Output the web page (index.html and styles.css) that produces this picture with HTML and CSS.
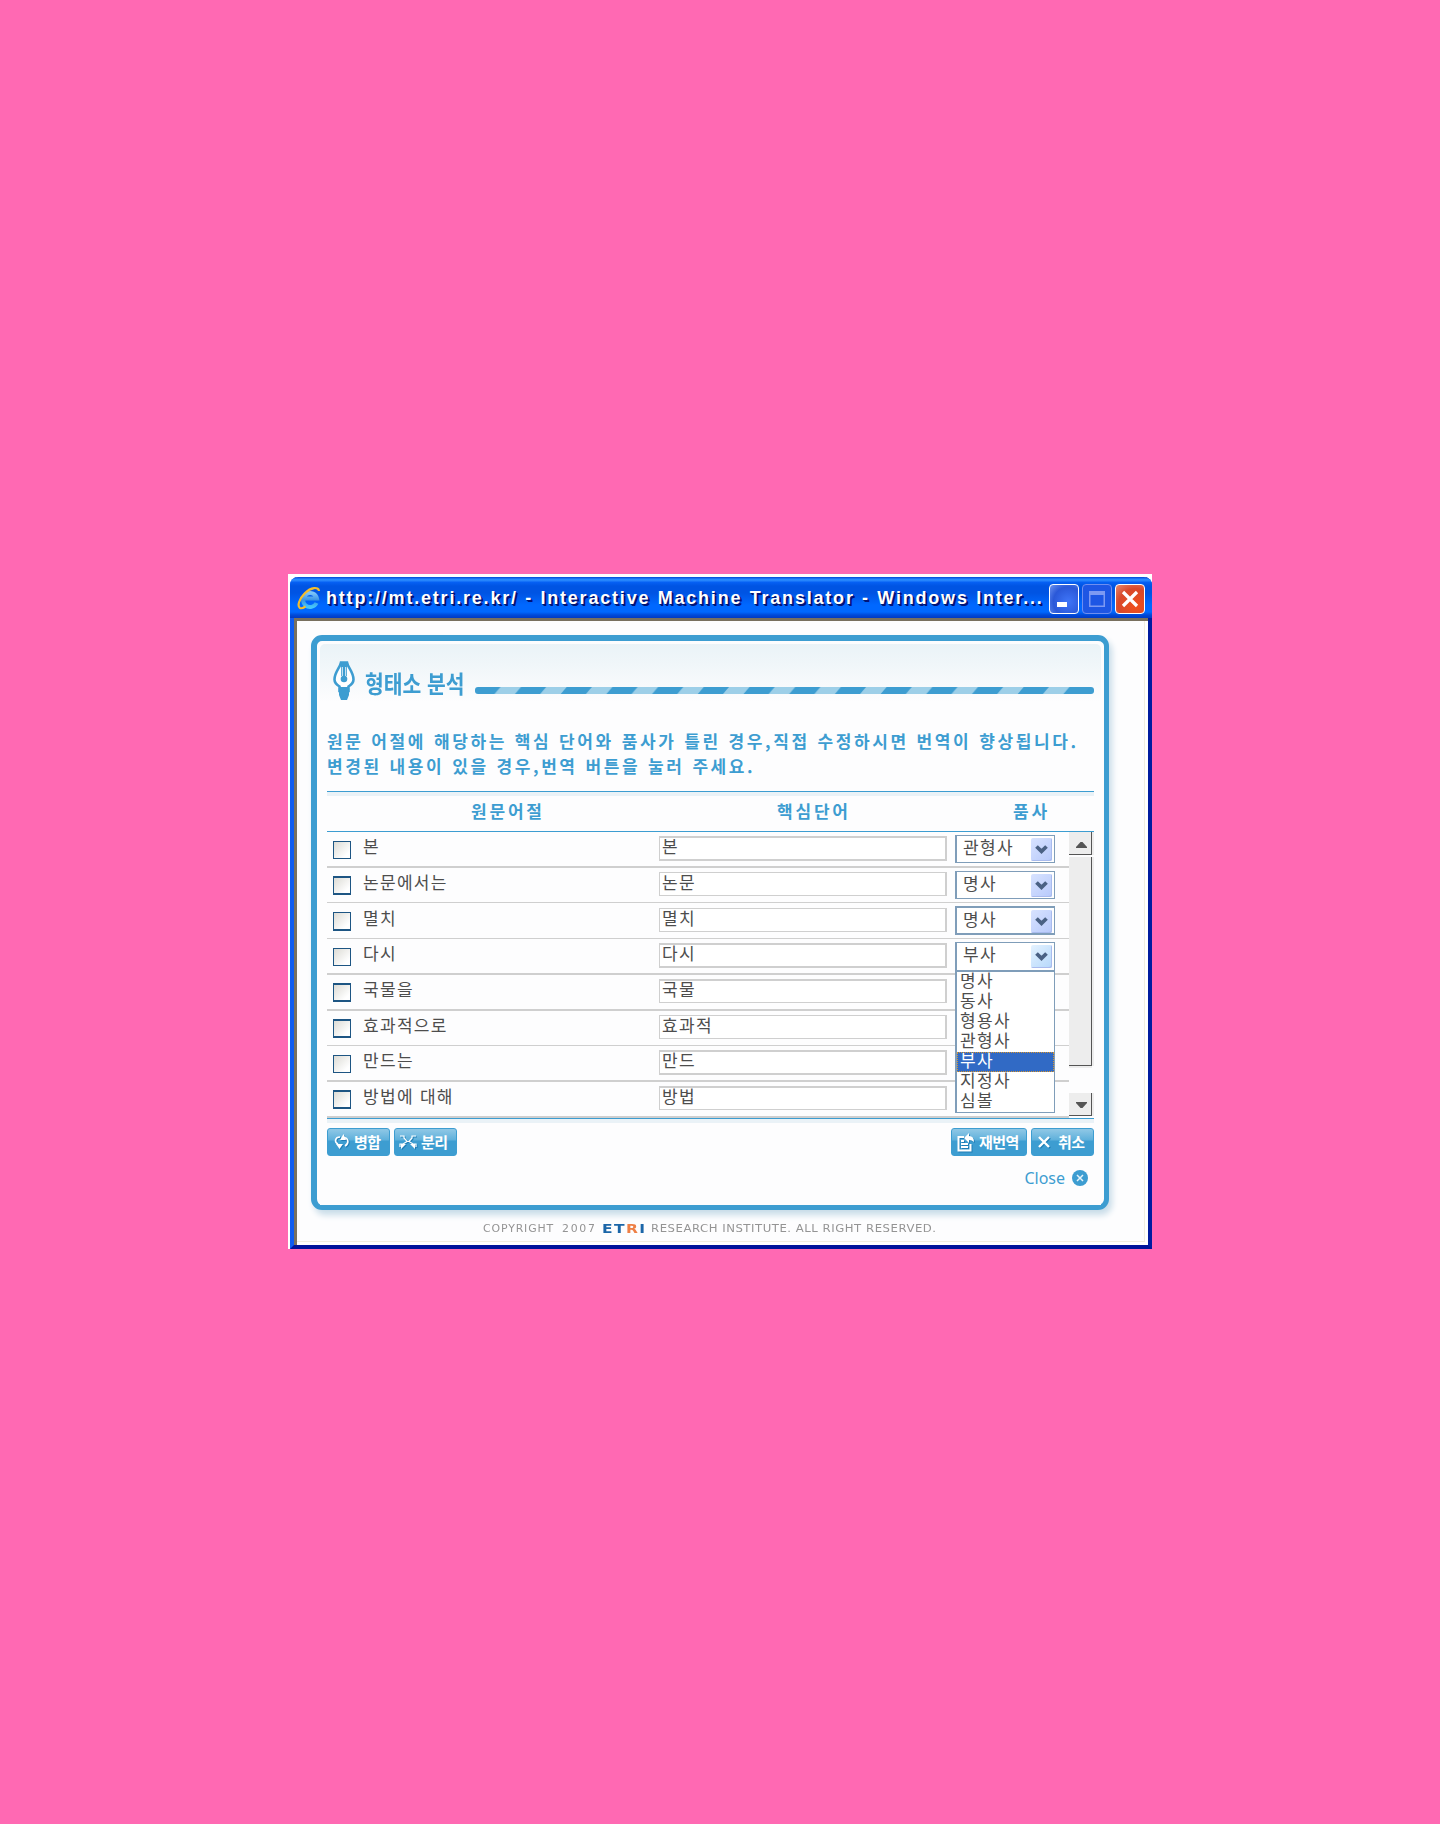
FILE: index.html
```html
<!DOCTYPE html>
<html lang="ko">
<head>
<meta charset="utf-8">
<title>Interactive Machine Translator</title>
<link rel="stylesheet" href="styles.css">
</head>
<body>
<svg width="0" height="0" class="defs">
  <symbol id="chev" viewBox="0 0 13 10"><path d="M1.500 1.500L6.500 6.300L11.500 1.500" fill="none" stroke="#4a6184" stroke-width="3.800"/></symbol>
</svg>
<div class="frame">
<div class="window">
  <div class="titlebar">
    <svg class="ie" width="24" height="24" viewBox="0 0 24 24">
      <defs><linearGradient id="g" x1="0" y1="0" x2="0" y2="1"><stop offset="0" stop-color="#7cc4fa"/><stop offset=".5" stop-color="#3a93e4"/><stop offset="1" stop-color="#45c6fa"/></linearGradient></defs>
      <path d="M19.500 17A7 7 0 1 1 20 12.500H8" fill="none" stroke="url(#g)" stroke-width="4"/>
      <path d="M22 5C21.500 0.500 14 1 8 7C2 13 0 20 3 22C4.500 22.800 7 21.500 8.500 20.500" fill="none" stroke="#f4bd2c" stroke-width="2.200"/>
    </svg>
    <span class="caption">http://mt.etri.re.kr/ - Interactive Machine Translator - Windows Inter...</span>
    <div class="controls">
      <span class="ctl min"><svg width="30" height="30" viewBox="0 0 30 30"><rect x="8" y="18" width="10" height="5" fill="#fff"/></svg></span>
      <span class="ctl max"><svg width="30" height="30" viewBox="0 0 30 30"><path d="M7 7h16v16H7zM8.500 11v10.500h13V11z" fill="#7d99f2" fill-rule="evenodd"/></svg></span>
      <span class="ctl cls"><svg width="30" height="30" viewBox="0 0 30 30"><path d="M8 8L22 22M22 8L8 22" stroke="#fff" stroke-width="3.200"/></svg></span>
    </div>
  </div>
  <div class="client">
    <div class="panel">
      <div class="inner">
        <div class="head">
          <svg class="pen" width="22" height="40" viewBox="0 0 22 40">
            <path d="M8 1.500C7 7 1.500 11 1.500 18.500C1.500 22 4 24 6.500 25.500V30H15.500V25.500C18 24 20.500 22 20.500 18.500C20.500 11 15 7 14 1.500z" fill="#fff" stroke="#3d9dd1" stroke-width="2.600"/>
            <path d="M8 1h6v14H8zM6 26h10v8l-2 5H8l-2-5z" fill="#3d9dd1"/>
            <path d="M9.300 6v11M12.700 6v11" stroke="#e8f3f9" stroke-width="1"/>
            <circle cx="11" cy="18" r="3.300" fill="#3d9dd1"/>
          </svg>
          <h1><span>형태소 분석</span></h1>
          <svg class="bar" width="619" height="7" viewBox="0 0 619 7">
            <defs><pattern id="st" x="19.500" width="45.700" height="7" patternUnits="userSpaceOnUse"><path d="M0 7L6 0H26.500L20.500 7z" fill="#9dcfe8"/></pattern></defs>
            <rect width="619" height="7" rx="3" fill="#3d9dd1"/><rect x="19" width="594" height="7" fill="url(#st)"/>
          </svg>
        </div>
        <p class="l1">원문 어절에 해당하는 핵심 단어와 품사가 틀린 경우,<i></i>직접 수정하시면 번역이 향상됩니다.</p>
        <p class="l2">변경된 내용이 있을 경우,<i></i>번역 버튼을 눌러 주세요.</p>
        <div class="thead"><span class="c1">원문어절</span><span class="c2">핵심단어</span><span class="c3">품사</span></div>
        <div class="list">
          <div class="rows">
            <div class="row h36 b2"><b class="cb"></b><span class="w">본</span><span class="in t2 e2">본</span><span class="sel">관형사<em><svg width="13" height="10"><use href="#chev"/></svg></em></span></div>
            <div class="row h35 b1"><b class="cb up"></b><span class="w">논문에서는</span><span class="in">논문</span><span class="sel">명사<em><svg width="13" height="10"><use href="#chev"/></svg></em></span></div>
            <div class="row h36 b1"><b class="cb tall"></b><span class="w lo">멸치</span><span class="in lower">멸치</span><span class="sel heavy">명사<em><svg width="13" height="10"><use href="#chev"/></svg></em></span></div>
            <div class="row h36 b2"><b class="cb"></b><span class="w">다시</span><span class="in t2 e2">다시</span><span class="sel open">부사<em><svg width="13" height="10"><use href="#chev"/></svg></em>
              <ul class="menu"><li>명사</li><li>동사</li><li>형용사</li><li>관형사</li><li class="on">부사</li><li>지정사</li><li>심볼</li></ul></span></div>
            <div class="row h36 b2"><b class="cb up"></b><span class="w">국물을</span><span class="in t2">국물</span></div>
            <div class="row h35 b1"><b class="cb up"></b><span class="w">효과적으로</span><span class="in">효과적</span></div>
            <div class="row h36 b2"><b class="cb"></b><span class="w">만드는</span><span class="in t2 e2">만드</span></div>
            <div class="row h36 b2"><b class="cb up"></b><span class="w">방법에 대해</span><span class="in t2">방법</span></div>
          </div>
          <div class="scroll">
            <span class="sb"><svg width="11" height="6"><path d="M0 6V5L4.500 0h2L11 5v1z" fill="#555"/></svg></span>
            <span class="thumb"></span>
            <span class="sb down"><svg width="11" height="6"><path d="M0 0V1L4.500 6h2L11 1V0z" fill="#555"/></svg></span>
          </div>
        </div>
        <div class="actions">
          <span class="btn"><svg width="16" height="16" viewBox="0 0 16 16"><path d="M6 3C1 3 0 8 4 10M10 3.500c5 1 5 6 1 8.500" fill="none" stroke="#fff" stroke-width="1.600"/><path d="M2 10h7l-3.500 5zM6 6l3.500-6L12 6z" fill="#fff"/></svg><span>병합</span></span>
          <span class="btn"><svg width="18" height="14" viewBox="0 0 18 14"><path d="M1 1h4v2l3 3.500h2L13 3V1h4M1 12V9h3l4-2.500M17 12V9h-3l-4-2.500" fill="none" stroke="#fff" stroke-width="1.200"/><path d="M2 9h5L2 14zM16 9h-5l5 5z" fill="#fff"/></svg><span>분리</span></span>
          <span class="gap"></span>
          <span class="btn wide"><svg width="18" height="20" viewBox="0 0 18 20"><path d="M7 5H1.500v13.500h12V12M4 9h3M4 12h7M4 15h7" fill="none" stroke="#fff" stroke-width="2"/><path d="M7 6l5-5v3q5 0 5 6q-2-2-5-2v3z" fill="#fff"/></svg><span>재번역</span></span>
          <span class="btn x"><svg width="12" height="12" viewBox="0 0 12 12"><path d="M1 1L11 11M11 1L1 11" stroke="#fff" stroke-width="2.400"/></svg><span>취소</span></span>
        </div>
        <div class="close"><span>Close</span><svg width="16" height="16" viewBox="0 0 16 16"><circle cx="8" cy="8" r="8" fill="#3d9dd1"/><path d="M5 5l6 6M11 5l-6 6" stroke="#e6f3fa" stroke-width="1.500"/></svg></div>
      </div>
    </div>
    <div class="copy"><span class="a">COPYRIGHT</span><span class="y">2007</span><span class="logo">ET<u>R</u>I</span><span class="r">RESEARCH INSTITUTE. ALL RIGHT RESERVED.</span></div>
  </div>
</div>
</div>
</body>
</html>
```
FILE: styles.css
```css
* { box-sizing: border-box; }
body { margin: 0; height: 1824px; padding: 574px 0 0 288px; background: #ff69b3; overflow: hidden; font-family: "Noto Sans CJK KR", sans-serif; }
.defs { position: absolute; }
.frame { width: 864px; height: 675px; padding: 3px 0 0 2px; background: #fff; }
.window { width: 862px; height: 672px; border: solid; border-width: 0 4px 4px; border-color: #001ca0 #001ca0 #00139a #0f5cf0; border-radius: 8px 8px 0 0; background: #fff; box-shadow: inset 0 -1px #0b3fdc; }
.titlebar { display: flex; align-items: flex-start; height: 41px; margin: 0 -4px; padding: 7px 7px 0 7px; border-radius: 8px 8px 0 0; background: linear-gradient(#0a55e0 0, #0a55e0 1px, #2b8dff 2px, #2482fb 4px, #0661f5 5px, #0054e3 9px, #0054e3 16px, #0068ff 28px, #0068ff 35px, #0049d8 38px, #003ac4 41px); }
.ie { flex: none; margin-top: 2px; }
.caption { flex: none; width: 720px; margin: 2px 0 0 5px; color: #fff; font: bold 18px/24px "Liberation Sans", sans-serif; letter-spacing: 1.8px; word-spacing: .6px; white-space: pre; text-shadow: 1px 1px #001478, 2px 2px #001478; }
.controls { display: flex; gap: 3px; margin-left: auto; }
.ctl { width: 30px; height: 30px; border: 1px solid #fff; border-radius: 4px; }
.ctl svg { display: block; margin: -1px; }
.min { background: radial-gradient(circle at 65% 60%, #3f75f8, #2a58d8 60%, #6c93f0); }
.max { border-color: #6f8ff0; background: #1e56e4; }
.cls { background: radial-gradient(circle at 70% 75%, #f0501c, #d8482a 60%, #e98a70); }
.client { height: 627px; padding: 14px 0 0 14px; border: solid; border-width: 3px 0 0 3px; border-color: #78705f; background: #fdfdfe; box-shadow: inset -3px -3px #fff, inset -4px -4px #efede0; }
.panel { width: 798px; height: 575px; border: solid #3d9dd1; border-width: 6px 5px 5px 6px; border-radius: 11px; background: #fdfdfe; box-shadow: 3px 5px 6px #c8dce8; }
.inner { height: 561px; margin: 3px; padding: 0 7px; border-radius: 5px 5px 0 0; background: linear-gradient(#eaf3f7, #f0f6f9 20px, #fdfdfe 58px); }
.head { display: flex; height: 60px; padding: 16px 0 0 6px; }
.pen { flex: none; margin-top: 1px; }
h1 { flex: none; width: 98px; margin: 9px 0 0 10px; color: #3d9dd1; font-size: 24px; line-height: 28px; font-weight: 700; white-space: nowrap; }
h1 span { display: inline-block; transform: scaleX(.85); transform-origin: 0 0; }
.bar { flex: none; margin: 27px 0 0 12px; }
p { margin: 0; color: #3d9dd1; font-weight: 700; font-size: 17px; line-height: 25px; letter-spacing: 2.6px; word-spacing: .5px; white-space: nowrap; }
.l1 { margin-top: 24px; }
.l2 { margin-bottom: 13px; }
.thead { display: flex; height: 41px; border: solid #3d9dd1; border-width: 1px 0; background: linear-gradient(#eaf2f7 4px, #fdfdfe 4px); color: #3d9dd1; font-weight: 700; font-size: 17px; line-height: 38px; letter-spacing: 2.8px; }
.c1 { width: 305px; padding-left: 144px; }
.c2 { width: 381px; padding-left: 145px; }
.list { display: flex; height: 286px; color: #4d4d4d; font-size: 17px; line-height: 18px; letter-spacing: 1.3px; }
.rows { width: 742px; }
.row { display: flex; align-items: flex-start; border: solid #cfcfcf; border-width: 0; }
.h36 { height: 36px; } .h35 { height: 35px; }
.b1 { border-bottom-width: 1px; } .b2 { border-bottom-width: 2px; }
.cb { flex: none; width: 18px; height: 18px; margin: 9px 12px 0 6px; border: 1px solid #1d5583; background: linear-gradient(135deg, #dcdbd5, #fff 80%); }
.cb.up { height: 19px; margin-top: 8px; border-width: 2px 1px; }
.cb.tall { height: 19px; border-bottom-width: 2px; }
.w { flex: none; width: 296px; margin-top: 5px; }
.lo { margin-top: 6px; }
.in { flex: none; width: 288px; height: 24px; margin-top: 4px; border: 1px solid #cfcfcf; border-right-width: 2px; padding-left: 2px; line-height: 18px; background: #fff; }
.t2 { border-top-width: 2px; line-height: 16px; }
.e2 { height: 25px; border-bottom-width: 2px; }
.lower { margin-top: 5px; }
.sel { position: relative; flex: none; display: flex; justify-content: space-between; width: 100px; height: 28px; margin: 3px 0 0 8px; padding: 2px 2px 0 6px; border: 1px solid #7f9db9; border-left-width: 2px; background: #fff; line-height: 17px; }
.heavy { height: 29px; border-top-width: 2px; border-bottom-width: 2px; }
.open { height: 29px; }
em { display: grid; place-items: center; width: 21px; height: 23px; border-radius: 2px; background: linear-gradient(135deg, #d8e3ff, #b7c9fb); box-shadow: inset -1px -1px #a9bbee; }
.open em { background: linear-gradient(135deg, #e4f2ff, #b5d8fb); }
.menu { position: absolute; left: -2px; top: 27px; z-index: 2; width: 100px; height: 143px; margin: 0; padding: 0; border: 1px solid #7f9db9; border-width: 2px 1px 1px 2px; background: #fff; list-style: none; }
li { height: 20px; padding-left: 3px; line-height: 15px; }
.on { background: #316ac5; color: #fff; outline: 1px dotted #d8952c; outline-offset: -1px; }
.scroll { width: 25px; }
.sb { display: grid; place-items: center; height: 23px; padding: 4px 0 0 3px; border: solid #555; border-width: 0 1px 1px 0; margin-right: 2px; background: #ededed; box-shadow: 2px 0 #ededed; }
.down { padding-top: 2px; }
.thumb { display: block; height: 209px; margin: 2px 2px 27px 0; border: solid #555; border-width: 0 1px 1px 0; background: #ededed; box-shadow: 2px 0 #ededed, 0 2px #ededed; }
.actions { display: flex; height: 38px; padding-top: 9px; gap: 4px; border-top: 1px solid #3d9dd1; box-shadow: inset 0 4px #eaf2f7; }
.btn { display: flex; align-items: center; width: 63px; height: 28px; padding-left: 6px; gap: 4px; border: 1px solid #3d9dd1; border-radius: 3px; background: linear-gradient(#8cc6e5 1px, #5eb0db 11px, #3d9dd1 12px); color: #fff; font-weight: 700; font-size: 15px; white-space: nowrap; }
.btn svg { flex: none; filter: drop-shadow(1px 1px #1f7db5); }
.btn span { flex: none; letter-spacing: -.6px; margin-top: -1px; }
.btn:nth-child(2) { padding-left: 4px; }
.gap { flex: 1; }
.wide { width: 76px; padding-left: 5px; }
.x { gap: 8px; }
.close { display: flex; justify-content: flex-end; align-items: center; gap: 7px; margin-top: 13px; padding-right: 6px; height: 18px; color: #3d9dd1; font: 16px/18px "Noto Sans", sans-serif; }
.copy { display: flex; align-items: center; height: 14px; margin: 12px 0 0 172px; color: #949494; font: 10px/14px "DejaVu Sans", sans-serif; white-space: pre; }
.copy span { transform-origin: 0 50%; }
.a { width: 79px; letter-spacing: .8px; transform: scaleX(1.09); }
.y { width: 40px; letter-spacing: 1.6px; transform: scaleX(1.09); }
.logo { width: 49px; color: #1b66a8; font-weight: 700; font-size: 13px; letter-spacing: 1.2px; transform: scaleX(1.19); }
.logo u { color: #ee7f45; text-decoration: none; }
.r { letter-spacing: .45px; transform: scaleX(1.168); }
```
